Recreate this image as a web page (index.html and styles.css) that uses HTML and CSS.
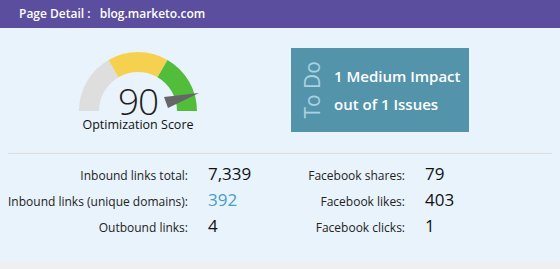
FILE: index.html
```html
<!DOCTYPE html>
<html lang="en">
<head>
    <meta charset="UTF-8">
    <meta name="viewport" content="width=device-width, initial-scale=1.0">
    <title>Page Detail</title>
    <link rel="stylesheet" href="styles.css">
</head>
<body>

    <div class="header">
        Page Detail : <span class="url">blog.marketo.com</span>
    </div>

    <div class="panel">
        <div class="top">
            <div class="score">
                <div class="gauge">
                    <svg width="124" height="62" viewBox="0 0 124 62">
                        <path d="M13 61 A49 49 0 0 1 37.5 18.56" fill="none" stroke="#dedede" stroke-width="20"/>
                        <path d="M37.5 18.56 A49 49 0 0 1 86.5 18.56" fill="none" stroke="#f6d14f" stroke-width="20"/>
                        <path d="M86.5 18.56 A49 49 0 0 1 111 61" fill="none" stroke="#52bd3b" stroke-width="20"/>
                        <polygon points="88,47 123,43 92,58" fill="#666666"/>
                    </svg>
                    <div class="score-num">90</div>
                </div>
                <div class="score-label">Optimization Score</div>
            </div>

            <div class="todo">
                <div class="todo-title">To Do</div>
                <div class="todo-text">
                    1 Medium Impact<br>
                    out of 1 Issues
                </div>
            </div>
        </div>

        <div class="stats">
            <div class="label">Inbound links total:</div>
            <div class="value">7,339</div>
            <div class="label">Facebook shares:</div>
            <div class="value">79</div>

            <div class="label">Inbound links (unique domains):</div>
            <div class="value link">392</div>
            <div class="label">Facebook likes:</div>
            <div class="value">403</div>

            <div class="label">Outbound links:</div>
            <div class="value">4</div>
            <div class="label">Facebook clicks:</div>
            <div class="value">1</div>
        </div>
    </div>

</body>
</html>
```

FILE: styles.css
```css
body {
    font-family: "Open Sans", Arial, sans-serif;
    margin: 0;
    padding: 0;
    background-color: #efefef;
    color: #222;
}

.header {
    background-color: #5c4e9e;
    color: white;
    font-size: 12px;
    font-weight: 600;
    height: 28px;
    line-height: 27px;
    padding-left: 19px;
}

.header .url {
    margin-left: 6px;
}

.panel {
    background-color: #e8f3fc;
    padding: 0 8px 23px;
}

.top {
    display: grid;
    grid-template-columns: 1fr 1fr;
    padding: 20px 0;
    border-bottom: 1px solid #dcdcdc;
}

.score {
    display: flex;
    flex-direction: column;
    align-items: center;
    padding-right: 12px;
    margin-top: 2px;
}

.gauge {
    position: relative;
    width: 124px;
    height: 62px;
}

.gauge svg {
    display: block;
}

.score-num {
    position: absolute;
    top: 36px;
    left: 0;
    right: 0;
    text-align: center;
    font-size: 37px;
    font-weight: 300;
    line-height: 30px;
    letter-spacing: -1px;
    color: #1e1e1e;
}

.score-label {
    margin-top: 5px;
    font-size: 12.5px;
    line-height: 16px;
    color: #111;
}

.todo {
    display: flex;
    align-items: center;
    margin-left: 11px;
    width: 178px;
    height: 84px;
    background-color: #5494ab;
    padding-left: 9px;
    box-sizing: border-box;
}

.todo-title {
    writing-mode: vertical-rl;
    transform: rotate(180deg);
    font-size: 21px;
    line-height: 24px;
    color: #a9d1e2;
}

.todo-text {
    margin-left: 10px;
    color: white;
    font-size: 15px;
    font-weight: 600;
    line-height: 28px;
    white-space: nowrap;
}

.stats {
    display: grid;
    grid-template-columns: 180px 80px 97px 1fr;
    column-gap: 20px;
    align-items: baseline;
    margin-top: 7px;
}

.label {
    text-align: right;
    white-space: nowrap;
    font-size: 12px;
    color: #222;
}

.value {
    font-size: 17px;
    line-height: 26px;
    color: #111;
}

.value.link {
    color: #4c9cc6;
}
```
